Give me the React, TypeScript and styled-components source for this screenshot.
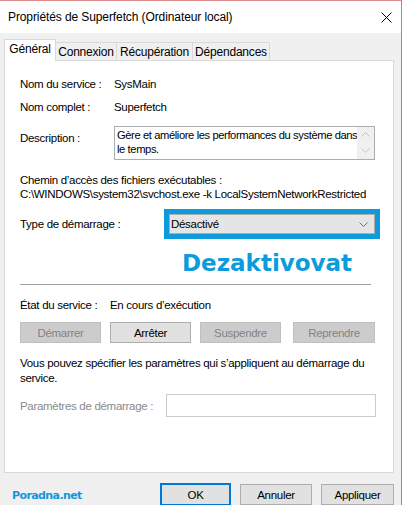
import React from 'react'
import styled, { createGlobalStyle } from 'styled-components'

const GlobalStyle = createGlobalStyle`
    html, body {
        margin: 0;
        padding: 0;
        background: #ffffff;
    }
    body {
        font-family: "Liberation Sans", Arial, sans-serif;
        font-size: 11.5px;
        letter-spacing: -0.3px;
        color: #000000;
    }
`

const Window = styled.div`
    width: 402px;
    height: 505px;
    border-top: 1px solid #de8a8a;
    border-right: 1px solid #d97474;
    background: #f0f0f0;
    box-sizing: border-box;
    overflow: hidden;
`

const TitleBar = styled.div`
    height: 32px;
    background: #ffffff;
    display: flex;
    align-items: center;
    justify-content: space-between;
    padding: 0 9px 0 8px;
    font-size: 12px;
    letter-spacing: -0.1px;
`

const Body = styled.div`
    padding: 6px 7px 0 4px;
`

const TabStrip = styled.div`
    display: flex;
    align-items: flex-end;
    height: 21px;
`

const Tab = styled.div<{ $active?: boolean; $w: number }>`
    width: ${p => p.$w}px;
    height: ${p => (p.$active ? 22 : 18)}px;
    box-sizing: border-box;
    display: flex;
    align-items: center;
    justify-content: center;
    background: ${p => (p.$active ? '#ffffff' : '#f0f0f0')};
    border: 1px solid #d9d9d9;
    border-bottom: none;
    margin-left: ${p => (p.$active ? 0 : -1)}px;
    position: relative;
    z-index: ${p => (p.$active ? 2 : 1)};
    margin-bottom: ${p => (p.$active ? -1 : 0)}px;
    padding-bottom: ${p => (p.$active ? 3 : 0)}px;
    font-size: 12px;
    letter-spacing: -0.2px;
    white-space: nowrap;
`

const Panel = styled.div`
    height: 413px;
    background: #ffffff;
    border: 1px solid #d9d9d9;
    box-sizing: border-box;
    padding: 15px 14px 0 15px;
`

const Row = styled.div<{ $h: number; $mt: number; $top?: boolean }>`
    display: flex;
    align-items: ${p => (p.$top ? 'flex-start' : 'center')};
    height: ${p => p.$h}px;
    margin-top: ${p => p.$mt}px;
`

const Label = styled.div<{ $w: number; $pt?: number; $muted?: boolean }>`
    width: ${p => p.$w}px;
    flex-shrink: 0;
    padding-top: ${p => p.$pt ?? 0}px;
    color: ${p => (p.$muted ? '#8a8a8a' : '#000000')};
    white-space: nowrap;
`

const Value = styled.div`
    white-space: nowrap;
`

const DescBox = styled.div`
    width: 261px;
    height: 34px;
    flex-shrink: 0;
    border: 1px solid #abadb3;
    box-sizing: border-box;
    display: flex;
`

const DescText = styled.div`
    flex: 1;
    padding: 1px 0 0 2px;
    line-height: 14px;
    font-size: 11.2px;
    letter-spacing: -0.4px;
    white-space: nowrap;
    overflow: hidden;
`

const ScrollBar = styled.div`
    width: 17px;
    flex-shrink: 0;
    background: #f0f0f0;
    display: flex;
    flex-direction: column;
    justify-content: space-between;
    align-items: center;
    padding: 5px 0 6px;
    box-sizing: border-box;
`

const TextLine = styled.div<{ $mt: number }>`
    line-height: 14px;
    margin-top: ${p => p.$mt}px;
    white-space: nowrap;
`

const SelectFrame = styled.div`
    width: 216px;
    height: 30px;
    flex-shrink: 0;
    border: 5px solid #0d9bdc;
    box-sizing: border-box;
    margin-left: -2px;
`

const Select = styled.div`
    height: 100%;
    background: #e5e5e5;
    border: 1px solid #acacac;
    box-sizing: border-box;
    display: flex;
    align-items: center;
    justify-content: space-between;
    padding: 0 6px 0 1px;
`

const Stamp = styled.div`
    margin-top: 10px;
    height: 28px;
    padding-left: 162px;
    font-family: "DejaVu Sans", Verdana, sans-serif;
    font-weight: 700;
    font-size: 23px;
    letter-spacing: 0;
    line-height: 28px;
    color: #0d9bdc;
    white-space: nowrap;
`

const Separator = styled.div`
    height: 1px;
    background: #a0a0a0;
    margin: 7px 8px 0 0;
`

const ButtonRow = styled.div`
    display: flex;
    margin-top: 9px;
`

const Button = styled.div<{ $disabled?: boolean; $w: number; $ml?: number; $default?: boolean }>`
    width: ${p => p.$w}px;
    height: ${p => (p.$default ? 23 : 21)}px;
    flex-shrink: 0;
    margin-left: ${p => p.$ml ?? 0}px;
    box-sizing: border-box;
    display: flex;
    align-items: center;
    justify-content: center;
    background: ${p => (p.$disabled ? '#cccccc' : '#e1e1e1')};
    border: ${p => (p.$default ? '2px solid #0078d7' : p.$disabled ? '1px solid #bfbfbf' : '1px solid #adadad')};
    color: ${p => (p.$disabled ? '#838383' : '#000000')};
    white-space: nowrap;
`

const ParamBox = styled.div`
    width: 210px;
    height: 23px;
    flex-shrink: 0;
    border: 1px solid #cccccc;
    box-sizing: border-box;
`

const Footer = styled.div`
    display: flex;
    align-items: center;
    height: 23px;
    margin-top: 10px;
    padding-left: 8px;
`

const Brand = styled.div`
    width: 150px;
    font-family: "DejaVu Sans", Verdana, sans-serif;
    font-weight: 700;
    font-size: 11px;
    letter-spacing: -0.6px;
    color: #1296dc;
    padding-top: 1px;
`

function Chevron({ up, color }: { up?: boolean; color: string }) {
    return (
        <svg width="9" height="5" viewBox="0 0 9 5">
            <path d={up ? 'M0.5 4.5 L4.5 0.5 L8.5 4.5' : 'M0.5 0.5 L4.5 4.5 L8.5 0.5'} fill="none" stroke={color} strokeWidth="1" />
        </svg>
    )
}

export default function App() {
    return (
        <>
            <GlobalStyle />
            <Window>
                <TitleBar>
                    <span>Propriétés de Superfetch (Ordinateur local)</span>
                    <svg width="11" height="11" viewBox="0 0 11 11">
                        <path d="M0.5 0.5 L10.5 10.5 M10.5 0.5 L0.5 10.5" stroke="#000" strokeWidth="1" />
                    </svg>
                </TitleBar>
                <Body>
                    <TabStrip>
                        <Tab $active $w={52}>Général</Tab>
                        <Tab $w={62}>Connexion</Tab>
                        <Tab $w={77}>Récupération</Tab>
                        <Tab $w={78}>Dépendances</Tab>
                    </TabStrip>
                    <Panel>
                        <Row $h={16} $mt={0}>
                            <Label $w={94}>Nom du service :</Label>
                            <Value>SysMain</Value>
                        </Row>
                        <Row $h={16} $mt={7}>
                            <Label $w={94}>Nom complet :</Label>
                            <Value>Superfetch</Value>
                        </Row>
                        <Row $h={34} $mt={11} $top>
                            <Label $w={94} $pt={6}>Description :</Label>
                            <DescBox>
                                <DescText>
                                    Gère et améliore les performances du système dans<br />
                                    le temps.
                                </DescText>
                                <ScrollBar>
                                    <Chevron up color="#c2c2c2" />
                                    <Chevron color="#c2c2c2" />
                                </ScrollBar>
                            </DescBox>
                        </Row>
                        <TextLine $mt={13}>Chemin d’accès des fichiers exécutables :</TextLine>
                        <TextLine $mt={0}>C:\WINDOWS\system32\svchost.exe -k LocalSystemNetworkRestricted</TextLine>
                        <Row $h={30} $mt={8}>
                            <Label $w={146}>Type de démarrage :</Label>
                            <SelectFrame>
                                <Select>
                                    <span>Désactivé</span>
                                    <Chevron color="#707070" />
                                </Select>
                            </SelectFrame>
                        </Row>
                        <Stamp>Dezaktivovat</Stamp>
                        <Separator />
                        <Row $h={16} $mt={12}>
                            <Label $w={90}>État du service :</Label>
                            <Value>En cours d’exécution</Value>
                        </Row>
                        <ButtonRow>
                            <Button $disabled $w={81}>Démarrer</Button>
                            <Button $w={81} $ml={9}>Arrêter</Button>
                            <Button $disabled $w={81} $ml={9}>Suspendre</Button>
                            <Button $disabled $w={82} $ml={12}>Reprendre</Button>
                        </ButtonRow>
                        <TextLine $mt={13}>Vous pouvez spécifier les paramètres qui s’appliquent au démarrage du</TextLine>
                        <TextLine $mt={1}>service.</TextLine>
                        <Row $h={23} $mt={9}>
                            <Label $w={146} $muted>Paramètres de démarrage :</Label>
                            <ParamBox />
                        </Row>
                    </Panel>
                    <Footer>
                        <Brand>Poradna.net</Brand>
                        <Button $default $w={71}>OK</Button>
                        <Button $w={72} $ml={9}>Annuler</Button>
                        <Button $w={73} $ml={9}>Appliquer</Button>
                    </Footer>
                </Body>
            </Window>
        </>
    )
}
